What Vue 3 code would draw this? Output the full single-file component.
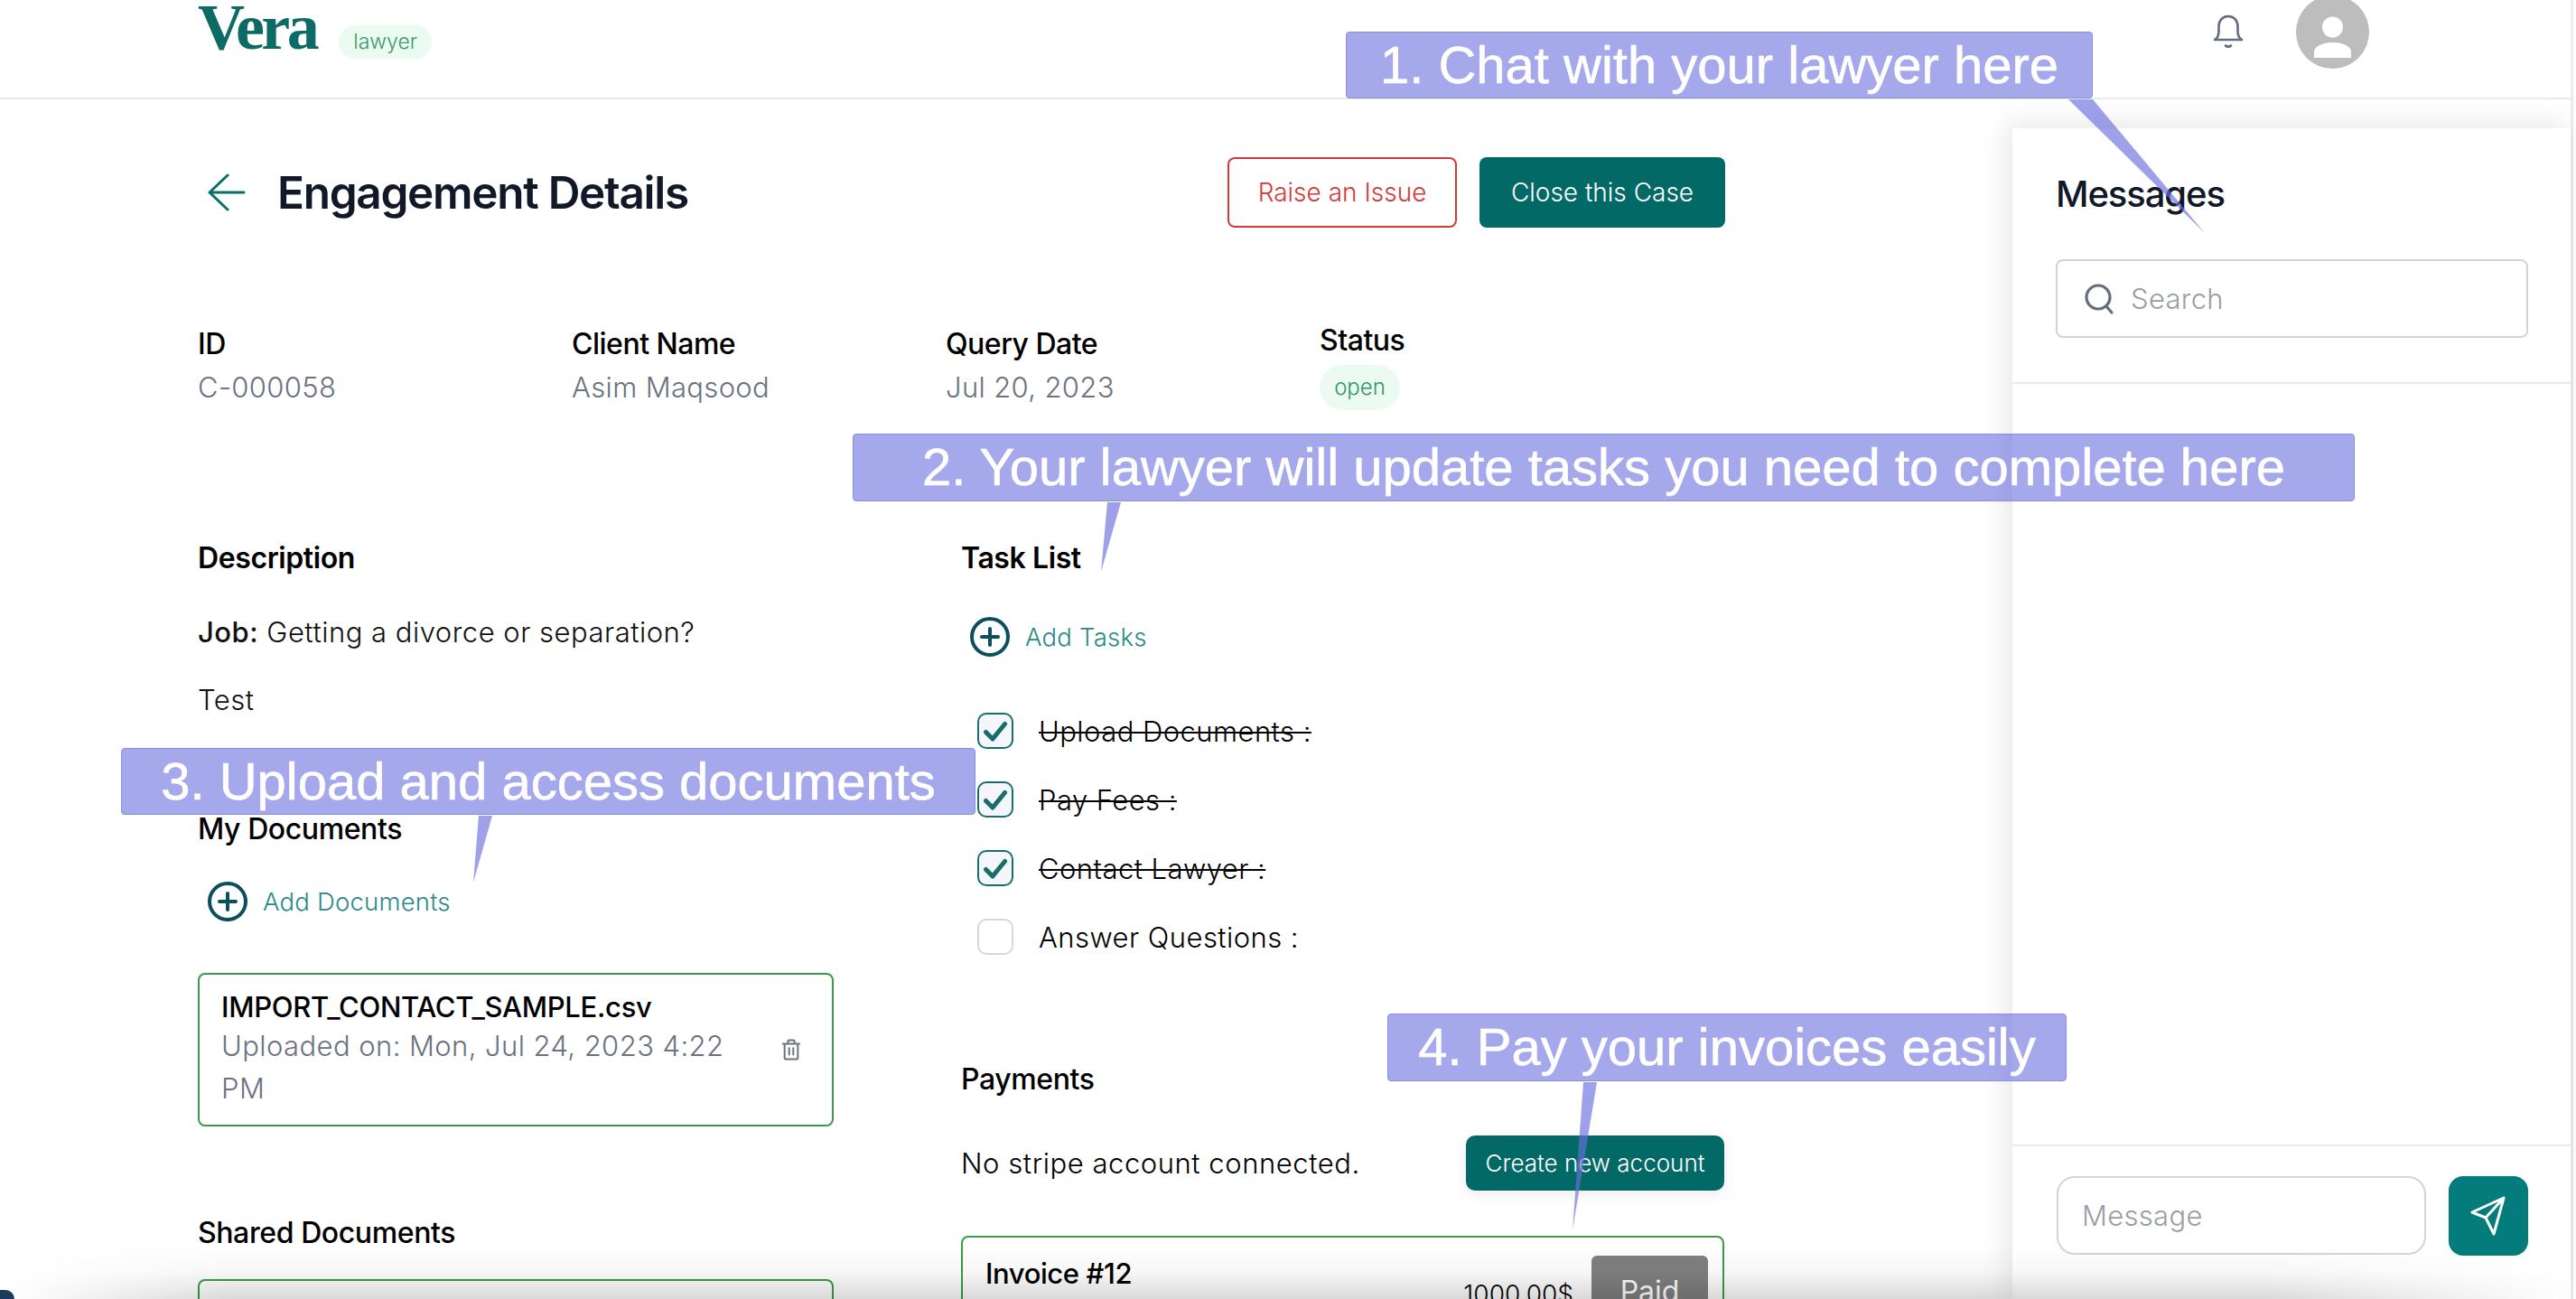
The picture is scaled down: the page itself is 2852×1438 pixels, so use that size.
<template>
  <div class="page">
    <header class="topbar">
      <div class="brand">
        <span class="logo">Vera</span>
        <span class="role">lawyer</span>
      </div>
      <div class="top-actions">
        <svg class="bell" viewBox="0 0 34 38" fill="none" stroke="#626b80" stroke-width="2.6" stroke-linecap="round" stroke-linejoin="round">
          <path d="M2 28c3-2 4.500-4 4.500-9v-6C6.500 6.500 11 2 17 2s10.500 4.500 10.500 11v6c0 5 1.500 7 4.500 9z" />
          <path d="M14 34.500c1.500 1.500 4.500 1.500 6 0" />
        </svg>
        <div class="avatar">
          <svg viewBox="0 0 81 81" fill="#fff">
            <circle cx="40.500" cy="35" r="11.500" />
            <path d="M20 69v-6c0-7 9-11 20.500-11S61 56 61 63v6z" />
          </svg>
        </div>
      </div>
    </header>

    <div class="body">
      <main class="main">
        <div class="title-row">
          <svg class="back" viewBox="0 0 42 42" fill="none" stroke="#0d6d69" stroke-width="3" stroke-linecap="round" stroke-linejoin="round">
            <path d="M22 2 2 21l20 19M2 21h38" />
          </svg>
          <h1>Engagement Details</h1>
          <div class="title-btns">
            <button class="btn btn-outline">Raise an Issue</button>
            <button class="btn btn-solid">Close this Case</button>
          </div>
        </div>

        <div class="info">
          <div v-for="item in info" :key="item.label" class="info-item">
            <div class="info-label">{{ item.label }}</div>
            <div class="info-value">{{ item.value }}</div>
          </div>
          <div class="info-item status">
            <div class="info-label">Status</div>
            <span class="badge">open</span>
          </div>
        </div>

        <div class="cols">
          <section class="col-left">
            <h2>Description</h2>
            <p class="job"><span class="job-key">Job:</span> Getting a divorce or separation?</p>
            <p class="test">Test</p>

            <h2 class="docs-head">My Documents</h2>
            <div class="add-row add-docs">
              <svg class="plus" viewBox="0 0 44 44" fill="none" stroke="#0c4f5c" stroke-width="4" stroke-linecap="round">
                <circle cx="22" cy="22" r="20" />
                <path d="M22 13v18M13 22h18" />
              </svg>
              <span>Add Documents</span>
            </div>
            <div class="doc-card upload-card">
              <div class="doc-text">
                <div class="doc-name">IMPORT_CONTACT_SAMPLE.csv</div>
                <div class="doc-date">Uploaded on: Mon, Jul 24, 2023 4:22 PM</div>
              </div>
              <svg class="trash" viewBox="0 0 24 26" fill="none" stroke="#6b7280" stroke-width="2.200" stroke-linecap="round" stroke-linejoin="round">
                <path d="M2 6h20M8 6V3c0-1 .6-1.500 1.500-1.500h5C15.400 1.500 16 2 16 3v3M4 6v16.500c0 1.200.8 2 2 2h12c1.200 0 2-.8 2-2V6M9.500 11v8M14.500 11v8" />
              </svg>
            </div>

            <h2 class="shared-head">Shared Documents</h2>
            <div class="doc-card shared-card"></div>
          </section>

          <section class="col-right">
            <h2>Task List</h2>
            <div class="add-row add-tasks">
              <svg class="plus" viewBox="0 0 44 44" fill="none" stroke="#0c4f5c" stroke-width="4" stroke-linecap="round">
                <circle cx="22" cy="22" r="20" />
                <path d="M22 13v18M13 22h18" />
              </svg>
              <span>Add Tasks</span>
            </div>
            <ul class="tasks">
              <li v-for="task in tasks" :key="task.name" class="task">
                <span class="check" :class="{ on: task.done }">
                  <svg v-if="task.done" viewBox="0 0 24 24" fill="none" stroke="#176e6b" stroke-width="3.400" stroke-linecap="round" stroke-linejoin="round">
                    <path d="M5 13l5 5 9-11" />
                  </svg>
                </span>
                <span class="task-name" :class="{ done: task.done }">{{ task.name }} :</span>
              </li>
            </ul>

            <h2 class="pay-head">Payments</h2>
            <div class="stripe-row">
              <span>No stripe account connected.</span>
              <button class="btn btn-solid btn-small">Create new account</button>
            </div>
            <div class="invoice">
              <div class="invoice-name">Invoice #12</div>
              <div class="invoice-right">
                <span class="amount">1000.00$</span>
                <span class="paid">Paid</span>
              </div>
            </div>
          </section>
        </div>
      </main>

      <aside class="chat">
        <div class="chat-top">
          <h3>Messages</h3>
          <div class="search">
            <svg viewBox="0 0 34 36" fill="none" stroke="#636c80" stroke-width="3.200" stroke-linecap="round">
              <circle cx="16" cy="16" r="13" />
              <path d="M25 26l6 7" />
            </svg>
            <span>Search</span>
          </div>
        </div>
        <div class="chat-list"></div>
        <div class="chat-bottom">
          <div class="msg-input">Message</div>
          <button class="send">
            <svg viewBox="0 0 40 44" fill="none" stroke="#fff" stroke-width="3" stroke-linejoin="round" stroke-linecap="round">
              <path d="M37 2 2 18l15 6 9 18zM37 2 17 24" />
            </svg>
          </button>
        </div>
      </aside>
    </div>

    <div class="callout c1">1. Chat with your lawyer here</div>
    <div class="callout c2">2. Your lawyer will update tasks you need to complete here</div>
    <div class="callout c3">3. Upload and access documents</div>
    <div class="callout c4">4. Pay your invoices easily</div>
    <svg class="tails" viewBox="0 0 2852 1438">
      <polygon points="2290,110 2317,110 2441,258" />
      <polygon points="1226,556 1241,556 1219,633" />
      <polygon points="530,903 545,903 524,977" />
      <polygon points="1753,1198 1768,1198 1741,1362" />
    </svg>
    <div class="edge-shade"></div>
    <div class="corner"></div>
  </div>
</template>

<script setup>
const info = [
  { label: "ID", value: "C-000058" },
  { label: "Client Name", value: "Asim Maqsood" },
  { label: "Query Date", value: "Jul 20, 2023" },
];

const tasks = [
  { name: "Upload Documents", done: true },
  { name: "Pay Fees", done: true },
  { name: "Contact Lawyer", done: true },
  { name: "Answer Questions", done: false },
];
</script>

<style>
html,
body {
  margin: 0;
  background: #fff;
  overflow: hidden;
}
</style>

<style scoped>
* {
  box-sizing: border-box;
}

.page {
  position: relative;
  width: 2852px;
  height: 1438px;
  overflow: hidden;
  background: #fff;
  font-family: Inter, "Noto Sans", sans-serif;
  color: #000;
}

.topbar {
  width: 2849px;
  height: 110px;
  padding: 0 223px 0 219px;
  border-bottom: 2px solid #e9eaec;
  border-right: 3px solid #ebebed;
  display: flex;
  justify-content: space-between;
}

.brand {
  display: flex;
  align-items: flex-start;
}

.logo {
  font-family: "Liberation Serif", serif;
  font-weight: 700;
  font-size: 72px;
  line-height: 60px;
  letter-spacing: -3.500px;
  color: #0c6b64;
}

.role {
  margin: 28px 0 0 25px;
  height: 37px;
  padding: 0 16px;
  border-radius: 18px;
  background: #ecfbf1;
  color: #3a9a68;
  font-size: 23px;
  font-weight: 300;
  line-height: 37px;
}

.top-actions {
  display: flex;
  align-items: flex-start;
  gap: 58px;
}

.bell {
  width: 34px;
  height: 38px;
  margin-top: 16px;
}

.avatar {
  width: 81px;
  height: 81px;
  margin-top: -5px;
  border-radius: 50%;
  background: #bdbdbd;
}

.avatar svg {
  display: block;
}

.body {
  display: flex;
  width: 2849px;
  height: 1328px;
  border-right: 3px solid #ebebed;
}

.main {
  width: 2228px;
  flex: none;
  padding: 82px 0 0 219px;
}

.title-row {
  display: flex;
  align-items: center;
  height: 42px;
  width: 1691px;
}

.back {
  width: 42px;
  height: 42px;
  margin-left: 11px;
}

h1 {
  margin: 0 0 0 35px;
  font-size: 49.500px;
  font-weight: 600;
  letter-spacing: -1.300px;
  color: #111827;
}

.title-btns {
  margin-left: auto;
  display: flex;
  gap: 25px;
}

.btn {
  font-family: inherit;
  font-size: 28px;
  font-weight: 300;
  border-radius: 8px;
  height: 78px;
  width: 254px;
  cursor: pointer;
}

.btn-outline {
  background: #fff;
  color: #d23c38;
  border: 2px solid #d23c38;
}

.btn-solid {
  width: 272px;
  background: #036966;
  color: #fff;
  border: 0;
}

.btn-small {
  width: 286px;
  height: 61px;
  font-size: 26px;
  border-radius: 10px;
  box-shadow: 0 4px 16px rgba(0, 0, 0, 0.08);
}

.info {
  display: grid;
  grid-template-columns: repeat(4, 414px);
  margin-top: 129px;
}

.info-label {
  font-size: 32px;
  font-weight: 500;
  line-height: 36px;
  letter-spacing: -0.500px;
}

.info-value {
  margin-top: 11px;
  font-size: 31px;
  font-weight: 300;
  letter-spacing: 0.350px;
  line-height: 38px;
  color: #6b7280;
}

.status {
  margin-top: -4px;
}

.badge {
  display: inline-block;
  margin-top: 9px;
  width: 89px;
  height: 50px;
  border-radius: 25px;
  background: #ecfbf1;
  color: #2f9563;
  font-size: 24px;
  font-weight: 300;
  line-height: 50px;
  text-align: center;
}

.cols {
  display: flex;
  gap: 141px;
  margin-top: 146px;
}

.col-left {
  width: 704px;
  flex: none;
}

.col-right {
  width: 845px;
  flex: none;
}

h2 {
  margin: 0;
  font-size: 32px;
  line-height: 36px;
  font-weight: 600;
  letter-spacing: -0.400px;
}

.job,
.test {
  margin: 0;
  font-size: 31px;
  font-weight: 300;
  letter-spacing: 0.500px;
  line-height: 40px;
  color: #111;
}

.job {
  margin-top: 44px;
}

.job-key {
  font-weight: 500;
}

.test {
  margin-top: 35px;
}

.docs-head {
  margin-top: 105px;
  font-weight: 500;
}

.add-row {
  display: flex;
  align-items: center;
  color: #2a8a87;
  font-size: 27.500px;
  font-weight: 300;
  letter-spacing: 0.200px;
}

.plus {
  width: 44px;
  height: 44px;
  flex: none;
}

.add-docs {
  margin: 40px 0 0 11px;
  gap: 17px;
}

.doc-card {
  border: 2px solid #3b9c46;
  border-radius: 8px;
  display: flex;
  align-items: center;
  padding: 0 34px 0 24px;
}

.upload-card {
  margin-top: 57px;
  height: 170px;
}

.doc-text {
  flex: 1;
}

.doc-name {
  font-size: 31px;
  line-height: 38px;
  font-weight: 500;
  letter-spacing: -0.300px;
}

.doc-date {
  font-size: 31px;
  font-weight: 300;
  letter-spacing: 0.420px;
  line-height: 47px;
  color: #6b7280;
  width: 590px;
}

.trash {
  width: 22px;
  height: 26px;
  flex: none;
}

.shared-head {
  margin-top: 100px;
  font-weight: 500;
}

.shared-card {
  margin-top: 33px;
  height: 120px;
}

.add-tasks {
  margin: 47px 0 0 10px;
  gap: 17px;
}

.tasks {
  list-style: none;
  margin: 62px 0 0;
  padding: 0 0 0 18px;
}

.task {
  display: flex;
  align-items: center;
  height: 40px;
  margin-bottom: 36px;
  gap: 28px;
  font-size: 31px;
  font-weight: 300;
  letter-spacing: 0.450px;
}

.check {
  width: 40px;
  height: 40px;
  flex: none;
  border: 2px solid #d5d8dd;
  border-radius: 10px;
}

.check.on {
  border-color: #176e6b;
  background: #f5f6fc;
}

.check svg {
  display: block;
  width: 36px;
  height: 36px;
}

.task-name.done {
  text-decoration: line-through;
  text-decoration-thickness: 2px;
}

.pay-head {
  margin-top: 120px;
  font-weight: 500;
}

.stripe-row {
  margin-top: 44px;
  display: flex;
  justify-content: space-between;
  align-items: center;
  font-size: 31px;
  font-weight: 300;
  letter-spacing: 0.550px;
}

.btn-small {
  letter-spacing: 0;
}

.invoice {
  margin-top: 50px;
  height: 200px;
  border: 2px solid #3b9c46;
  border-radius: 8px;
  padding: 20px 16px 0 25px;
  display: flex;
  justify-content: space-between;
}

.invoice-name {
  font-size: 31px;
  line-height: 40px;
  font-weight: 500;
  letter-spacing: -0.400px;
}

.invoice-right {
  display: flex;
  align-items: flex-start;
  gap: 20px;
}

.amount {
  font-size: 28px;
  font-weight: 300;
  letter-spacing: 0;
  margin-top: 26px;
}

.paid {
  width: 129px;
  height: 80px;
  border-radius: 6px;
  background: #808080;
  color: #fff;
  font-size: 32px;
  font-weight: 400;
  letter-spacing: 0;
  line-height: 80px;
  text-align: center;
}

.chat {
  width: 618px;
  flex: none;
  margin-top: 32px;
  background: #fff;
  display: flex;
  flex-direction: column;
  box-shadow: -6px -4px 30px rgba(0, 0, 0, 0.1);
  position: relative;
  z-index: 1;
}

.chat-top {
  height: 283px;
  padding: 54px 47px 0 48px;
  border-bottom: 2px solid #e9eaec;
}

h3 {
  margin: 0;
  font-size: 40px;
  line-height: 38px;
  font-weight: 500;
  letter-spacing: -1.100px;
  color: #111827;
}

.search {
  margin-top: 53px;
  height: 87px;
  border: 2px solid #cfd4da;
  border-radius: 8px;
  display: flex;
  align-items: center;
  padding-left: 29px;
  gap: 18px;
  font-size: 31px;
  font-weight: 300;
  letter-spacing: 0.300px;
  color: #9a9ea4;
}

.search svg {
  width: 34px;
  height: 36px;
}

.chat-list {
  flex: 1;
  border-bottom: 2px solid #e9eaec;
}

.chat-bottom {
  height: 169px;
  padding: 33px 47px 0 49px;
  display: flex;
  gap: 25px;
}

.msg-input {
  flex: 1;
  height: 87px;
  border: 2px solid #d2d5da;
  border-radius: 20px;
  padding-left: 26px;
  font-size: 31px;
  font-weight: 300;
  letter-spacing: 0.300px;
  line-height: 83px;
  color: #9a9ea4;
}

.send {
  width: 88px;
  height: 88px;
  border: 0;
  border-radius: 16px;
  background: #047c7c;
  display: flex;
  align-items: center;
  justify-content: center;
  padding: 0;
}

.send svg {
  width: 40px;
  height: 44px;
}

/* tutorial callouts drawn over the screenshot */
.callout {
  position: absolute;
  z-index: 3;
  background: rgba(106, 110, 223, 0.6);
  border: 1px solid #8a8ee0;
  border-radius: 4px;
  color: #fff;
  font-family: "Liberation Sans", Arial, sans-serif;
  font-size: 58px;
  -webkit-text-stroke: 0.6px #fff;
  white-space: nowrap;
  display: flex;
  align-items: center;
  justify-content: center;
  padding-bottom: 2px;
}

.c1 {
  left: 1490px;
  top: 35px;
  width: 827px;
  height: 74px;
}

.c2 {
  left: 944px;
  top: 480px;
  width: 1663px;
  height: 75px;
}

.c3 {
  left: 134px;
  top: 828px;
  width: 946px;
  height: 74px;
}

.c4 {
  left: 1536px;
  top: 1122px;
  width: 752px;
  height: 75px;
}

.tails {
  position: absolute;
  z-index: 3;
  inset: 0;
  width: 2852px;
  height: 1438px;
  pointer-events: none;
}

.tails polygon {
  fill: rgba(106, 110, 223, 0.65);
}

.edge-shade {
  position: absolute;
  z-index: 4;
  left: 0;
  right: 0;
  bottom: 0;
  height: 60px;
  background: linear-gradient(to bottom, rgba(0, 0, 0, 0), rgba(0, 0, 0, 0.03) 50%, rgba(0, 0, 0, 0.15));
  -webkit-mask-image: linear-gradient(to right, transparent 10px, #000 260px, #000 2500px, transparent 2852px);
  mask-image: linear-gradient(to right, transparent 10px, #000 260px, #000 2500px, transparent 2852px);
  pointer-events: none;
}

.corner {
  position: absolute;
  z-index: 4;
  left: 0;
  bottom: 0;
  width: 16px;
  height: 10px;
  background: #1c3a5e;
  border-top-right-radius: 14px;
}
</style>
